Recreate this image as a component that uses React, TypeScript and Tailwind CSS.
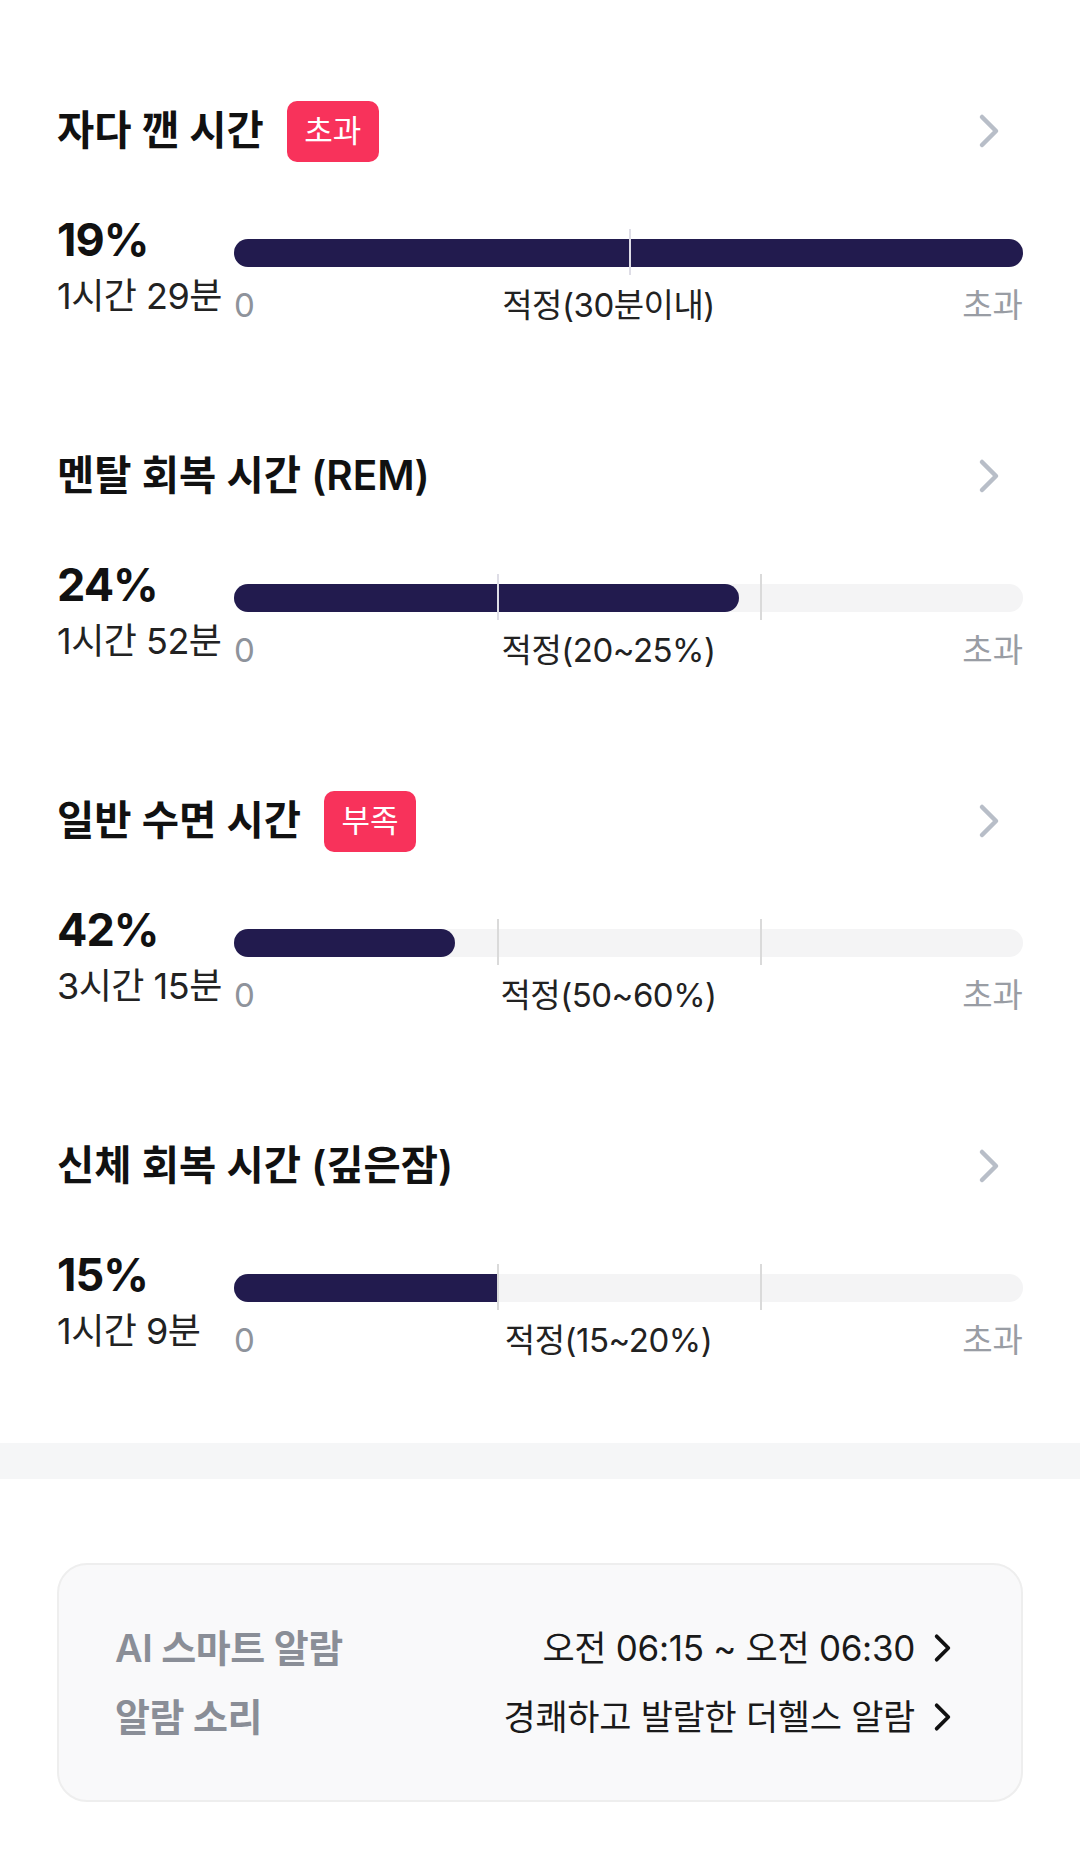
import React from "react";

interface StageData {
  title: string;
  badge?: string;
  pct: string;
  dur: string;
  range: string;
  fill: number;
  ticks: number[];
}

const stages: StageData[] = [
  { title: "자다 깬 시간", badge: "초과", pct: "19%", dur: "1시간 29분", range: "적정(30분이내)", fill: 100, ticks: [50] },
  { title: "멘탈 회복 시간 (REM)", pct: "24%", dur: "1시간 52분", range: "적정(20~25%)", fill: 64, ticks: [33.3, 66.7] },
  { title: "일반 수면 시간", badge: "부족", pct: "42%", dur: "3시간 15분", range: "적정(50~60%)", fill: 28, ticks: [33.3, 66.7] },
  { title: "신체 회복 시간 (깊은잠)", pct: "15%", dur: "1시간 9분", range: "적정(15~20%)", fill: 33.3, ticks: [33.3, 66.7] },
];

const Chevron = ({ className }: { className?: string }) => (
  <svg viewBox="0 0 22 36" className={className} fill="none">
    <path d="M4 4 L18 18 L4 32" stroke="currentColor" strokeWidth="4.5" strokeLinecap="round" strokeLinejoin="round" />
  </svg>
);

const Stage = ({ s }: { s: StageData }) => (
  <div>
    {/* title row */}
    <div className="flex h-[62px] items-center justify-between">
      <div className="flex items-center gap-[23px]">
        <h2 className="text-[40.5px] font-semibold text-[#111]">{s.title}</h2>
        {s.badge && (
          <span className="flex h-[61px] w-[92px] items-center justify-center rounded-[10px] bg-[#f8325b] text-[31px] text-white">
            {s.badge}
          </span>
        )}
      </div>
      <Chevron className="mr-[23px] h-[36px] w-[22px] text-[#b8bec8]" />
    </div>

    {/* stats row */}
    <div className="mt-[52px] flex">
      <div className="w-[177px] shrink-0">
        <p className="text-[45px] leading-[52px] font-bold tracking-[-1px] text-[#111]">{s.pct}</p>
        <p className="mt-[6px] text-[36px] leading-[48px] tracking-[-0.5px] whitespace-nowrap text-[#222]">{s.dur}</p>
      </div>
      <div className="flex-1 pt-[25px]">
        <div className="relative h-[28px] rounded-full bg-[#f4f4f5]">
          <div
            className={`absolute top-0 left-0 h-full bg-[#221b4e] ${s.fill > 30 && s.fill < 40 ? "rounded-l-full rounded-r-[6px]" : "rounded-full"}`}
            style={{ width: `${s.fill}%` }}
          />
          {s.ticks.map((t) => (
            <div
              key={t}
              className={`absolute top-[-10px] bottom-[-8px] w-[2px] ${t < s.fill ? "bg-[#dedde6]" : "bg-[#dadada]"}`}
              style={{ left: `${t}%` }}
            />
          ))}
        </div>
        <div className="mt-[20px] flex justify-between text-[33px] leading-[36px]">
          <span className="text-[#8e939b]">0</span>
          <span className="tracking-[-0.5px] text-[#222]">{s.range}</span>
          <span className="text-[#999da4]">초과</span>
        </div>
      </div>
    </div>
  </div>
);

export default function App() {
  return (
    <div className="min-h-[1859px] w-[1080px] bg-white font-[Inter,'Noto_Sans_CJK_KR',sans-serif]">
      <div className="flex flex-col gap-[122px] px-[57px] pt-[100px]">
        {stages.map((s) => (
          <Stage key={s.title} s={s} />
        ))}
      </div>

      <div className="mt-[85px] h-[36px] bg-[#f5f6f7]" />

      <div className="px-[57px] pt-[84px]">
        <div className="flex flex-col gap-[19px] rounded-[30px] border-2 border-[#eeeeee] bg-[#f9f9fa] py-[58px] pr-[69px] pl-[56px]">
          <div className="flex h-[50px] items-center justify-between">
            <span className="text-[38px] font-semibold tracking-[-0.5px] text-[#8a8e97]">AI 스마트 알람</span>
            <span className="flex items-center gap-[18px] text-[35px] tracking-[-0.3px] text-[#1a1a1a]">
              오전 06:15 ~ 오전 06:30
              <Chevron className="h-[30px] w-[19px] text-[#111]" />
            </span>
          </div>
          <div className="flex h-[50px] items-center justify-between">
            <span className="text-[38px] font-semibold tracking-[-0.5px] text-[#8a8e97]">알람 소리</span>
            <span className="flex items-center gap-[18px] text-[35px] tracking-[-0.3px] text-[#1a1a1a]">
              경쾌하고 발랄한 더헬스 알람
              <Chevron className="h-[30px] w-[19px] text-[#111]" />
            </span>
          </div>
        </div>
      </div>
    </div>
  );
}
